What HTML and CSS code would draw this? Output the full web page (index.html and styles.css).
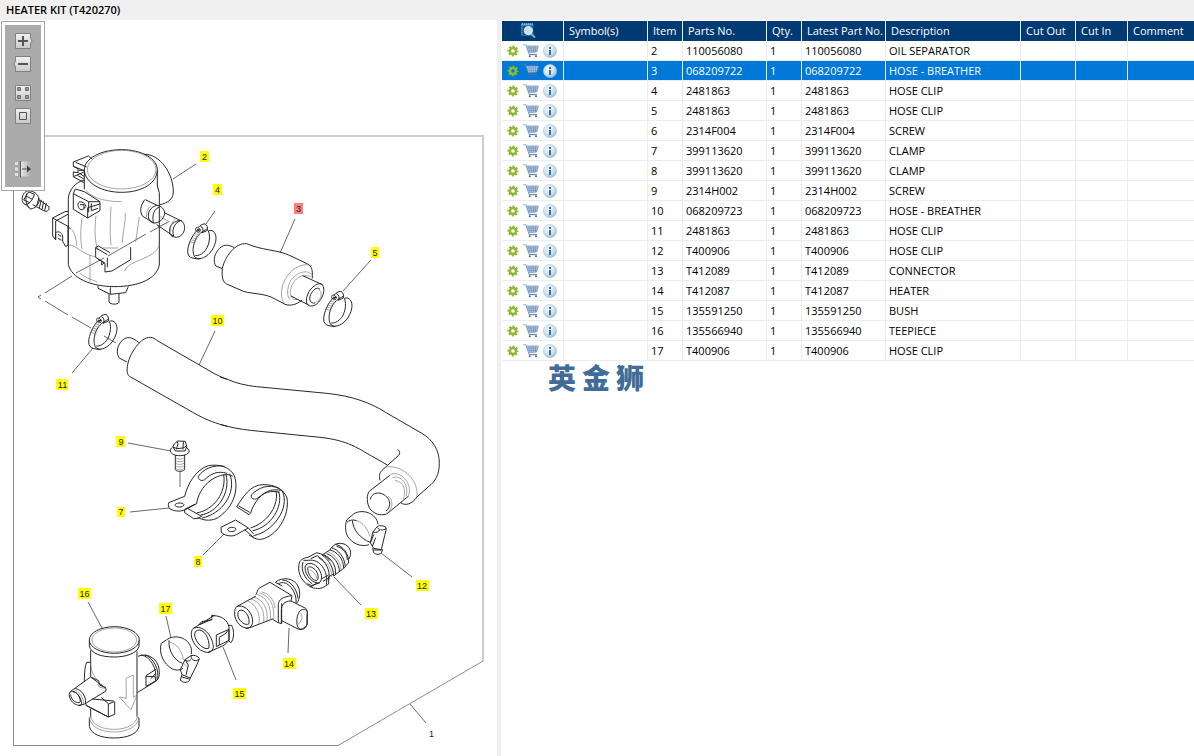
FILE: index.html
```html
<!DOCTYPE html>
<html lang="en">
<head>
<meta charset="utf-8">
<title>HEATER KIT (T420270)</title>
<link rel="stylesheet" href="styles.css">
</head>
<body>
<svg class="defs" aria-hidden="true">
  <defs>
    <linearGradient id="btn" x1="0" y1="0" x2="0" y2="1"><stop offset="0" stop-color="#f2f2f2"/><stop offset="1" stop-color="#c9c9c9"/></linearGradient>
    <linearGradient id="fade" x1="0" y1="0" x2="1" y2="0"><stop offset="0" stop-color="#ececec"/><stop offset="1" stop-color="#ababab"/></linearGradient>
    <radialGradient id="glass" cx=".4" cy=".35" r=".7"><stop offset="0" stop-color="#f0f7fb"/><stop offset=".6" stop-color="#cfe2ee"/><stop offset="1" stop-color="#8fb6d0"/></radialGradient>
    <symbol id="gear" viewBox="0 0 12 12">
      <circle cx="6" cy="6" r="4.7" fill="none" stroke="#86b52b" stroke-width="1.6" stroke-dasharray="2 1.69" stroke-dashoffset="1"/>
      <circle cx="6" cy="6" r="3" fill="none" stroke="#8cbb33" stroke-width="2.4"/>
    </symbol>
    <symbol id="cart" viewBox="0 0 48 48">
      <path d="M9 9H46L41 27L16 29Z" fill="#c3d3e6"/>
      <path d="M1 5H8L19 36M9 9H46L41 27L16 29M12 15H44M14 22H43M17 10L21 28M24 10L26 28M31 10L32 28M38 10L37 28" fill="none" stroke="#6488b3" stroke-width="2"/>
      <path d="M18 35H42" stroke="#4d74a3" stroke-width="3"/>
      <circle cx="20" cy="40" r="3" fill="#456c9b"/><circle cx="39" cy="40" r="3" fill="#456c9b"/>
    </symbol>
    <symbol id="info" viewBox="0 0 14 14">
      <circle cx="7" cy="7" r="6.600" fill="url(#glass)" stroke="#a9c6da" stroke-width=".6"/>
      <path d="M6 3H8V5H6ZM6 6H8V11H6Z" fill="#3a6fa0"/>
    </symbol>
    <symbol id="clip" viewBox="0 0 100 120" overflow="visible">
      <path class="k" d="M31 20C15 35 2 65 2 84C2 96 8 102 18 104L37 107M31 20L41 19M62 14C58 20 35 25 25 50C15 72 17 95 25 102C37 112 62 100 75 80C90 56 91 32 78 23C74 20 70 20 64 22M64 22C72 40 66 72 50 86C42 94 32 97 25 96"/>
      <path class="k" d="M33 13C38 6 46 1 54 1C60 5 63 12 61 21L45 28M40 8C48 10 50 20 46 28M26 19C24 12 32 10 37 15C42 20 39 28 32 26C28 25 27 22 26 19ZM30 17L37 24M37 16L31 24"/>
      <path class="t" d="M21 29L38 35M18 35L34 41M14 42L31 47M11 48L28 53M9 55L25 59"/>
    </symbol>
  </defs>
</svg>

<header class="titlebar"><h1>HEATER KIT (T420270)</h1></header>

<main class="split">
  <section class="drawing" aria-label="Parts diagram">
    <svg class="diagram" viewBox="0 20 497 736" role="img" aria-label="Heater kit exploded view">
      <g fill="none">
        <path d="M44 136H483V661" stroke="#cdcdcd" stroke-width="2"/>
        <path d="M13.500 136V745.500H338L483 661" stroke="#8c8c8c"/>
      </g>

      <g class="lead">
        <path d="M196 164L173 179M215 211L206 224M295 219L280 253M371 260L343 291M215 331L199 365M72 373L93 348M128 443L171 451M180 472V487M130 512L169 508M203 555L224 534M412 577L381 553M361 605L334 577M288 653L289 628M88 602L102 628M166 616L171 638M236 680L223 647M410 704L426 723"/>
        <path d="M168 222L150 232M146 234L108 256M104 258L76 273M72 276L45 293M41 295L38 297L41 299M45 301L68 315M72 317L91 328"/>
        <path d="M104 336L116 343"/>
      </g>

      <g transform="translate(10 130) scale(.3333)">
        <path class="k" d="M223 120C223 85 273 59 335 59C396 59 442 86 442 120V168L448 188V405M223 120V178M223 120C225 160 276 187 335 187C398 187 440 158 442 122"/>
        <ellipse class="t" cx="335" cy="119" rx="103" ry="58"/>
        <path class="k" d="M403 73C450 72 490 130 490 186C490 207 474 219 450 224M223 150C196 156 175 182 175 208V403C184 444 240 469 312 470C388 470 440 446 448 405"/>
        <path class="k" d="M190 96L235 78L246 87M190 96V109L222 122M190 125V140L222 158M190 109L204 116V128L190 126M206 121H222M205 128L222 139M190 140L222 126M197 97L230 111M202 136L222 147"/>
        <path class="k" d="M196 177L190 191V238L233 264L270 242V215L223 185ZM190 191L236 215L270 215M233 264V233L270 222M236 215V247M244 220V242L264 235M204 222C208 210 224 216 228 229L220 238C210 242 204 234 204 222M210 224H222V236"/>
        <path class="k" d="M174 244L165 245L128 264V318L137 329V273L174 253M128 264L174 289V345M174 289L182 298M137 329V310C139 303 154 303 158 318V334L167 350L176 344M144 313L154 320M144 325L155 331"/>
        <path class="t" d="M187 300C200 320 198 338 201 348M216 264C211 300 211 330 216 357M258 257C253 300 255 335 263 360M303 230C300 280 300 320 303 346M346 250C348 274 337 310 337 340M388 261L377 336M176 345C198 344 220 376 257 380M240 375V455M448 345C435 390 354 388 343 424M229 183C255 210 300 215 335 215M210 430C225 442 240 447 262 456"/>
        <path class="k" d="M265 348L257 353V382L285 400V426L306 423L362 389V352M257 353L292 374M265 348L300 368M292 383V412M264 388L283 398L275 405V395"/>
        <path class="t" d="M277 354H325"/>
        <path class="k" d="M404 209L395 225C390 240 392 250 398 259L432 279M406 209L445 228M416 265C412 247 421 231 441 226C454 227 464 238 464 251C461 268 446 281 430 279C424 277 419 273 416 265ZM430 275C426 256 432 237 447 232M463 248L516 274M440 284L490 318M480 311C475 292 484 276 510 271C522 275 528 291 521 306C515 319 502 325 490 320C484 318 481 316 480 311ZM491 318C485 300 492 280 510 273"/>
        <path class="t" d="M423 227C412 235 408 251 410 262M497 267C485 275 480 290 483 306M447 258L478 275L452 288"/>
        <path class="k" d="M264 468V475L301 493L347 488L355 470M301 493V472M297 493V516C302 524 322 525 327 517V491"/>
        <path class="k" d="M61 183C50 181 42 187 38 198C34 211 38 222 49 225L62 237C76 235 86 225 88 210L117 230V237C114 245 108 245 101 242L68 224M61 183C77 185 88 198 87 212M48 198L56 186L74 193L67 208ZM48 198L41 210L59 218L67 208M49 225L59 218"/>
        <path class="k" d="M51 190C44 205 48 225 60 236M87 204L80 227M94 209L88 234M101 214L96 239M109 219L104 243"/>
      </g>

      <use href="#clip" x="0" y="0" width="100" height="120" transform="translate(187 223.500) scale(.3333)"/>
      <use href="#clip" x="0" y="0" width="100" height="120" transform="translate(323 291) scale(.3333)"/>
      <use href="#clip" x="0" y="0" width="100" height="120" transform="translate(88 314) scale(.3333)"/>

      <g transform="translate(180 140) scale(.3333)">
        <path class="k" d="M163 323C145 313 127 311 113 332C102 346 100 365 107 378L127 386M200 311C165 308 135 350 127 385C125 412 128 427 140 432L190 454C220 463 254 459 285 477L315 493C333 499 350 493 366 481M200 311C245 331 290 329 326 345L377 369C392 375 398 384 397 406V415"/>
        <path class="t" d="M397 378C374 367 341 381 324 405C300 437 300 475 313 491M397 405C379 385 347 400 332 422C320 447 320 470 331 480M393 411C366 397 342 417 333 443C328 462 332 470 341 478L357 479"/>
        <path class="k" d="M368 407L427 434M333 468L386 495M427 434C438 449 428 478 409 493C397 501 384 500 380 489C376 474 386 449 403 438C412 431 421 429 427 434ZM420 448C410 438 397 453 392 464C385 480 392 491 405 489"/>
        <path class="t" d="M416 448C430 458 423 480 407 487"/>
      </g>

      <g transform="translate(20 290) scale(.3333)">
        <path class="k" d="M357 158C336 141 320 136 303 155C288 174 290 195 299 205L321 216M391 142C360 141 326 195 322 230C320 249 323 257 332 261L520 368C560 391 590 401 622 409M391 142C402 142 408 150 417 155L585 252C600 259 610 264 622 268"/>
      </g>
      <g transform="translate(220 340) scale(.3333)">
        <path class="k" d="M22 118C50 130 75 136 110 140L320 160C400 168 455 190 500 219L604 279C638 299 658 328 658 370C658 405 645 425 628 438L591 471C575 494 555 498 542 488M22 259C50 266 85 271 120 274L300 292C385 301 415 326 455 348L502 375"/>
        <path class="k" d="M22 118L0 111M22 259L0 253"/>
        <path class="k" d="M533 328C540 334 541 341 536 346L486 391C477 400 478 412 480 421M510 406L450 452C438 462 440 493 451 508C468 527 490 528 504 519L566 468"/>
        <path class="t" d="M500 381C550 374 600 425 590 472M511 404C542 390 578 430 566 467M518 413C542 403 569 435 558 469M525 421C545 425 560 440 551 477M505 468C520 482 519 502 504 518"/>
        <path class="k" d="M451 479C456 450 494 455 506 479C513 493 507 508 498 513"/>
      </g>

      <g transform="translate(100 430) scale(.3333)">
        <path class="k" d="M223 42L233 33L256 34L260 50L255 63H226L219 50ZM219 51L231 56L249 54L260 48M231 34L234 42L229 58M250 35L249 58M218 51C207 58 209 72 228 76C247 80 268 73 268 63L260 52M226 76V119C232 126 247 126 254 119V75"/>
        <path class="t" d="M227 84C235 89 246 88 254 83M227 92C235 97 246 96 254 91M227 100C235 105 246 104 254 99M227 108C235 113 246 112 254 107M227 116C235 121 246 120 254 115"/>
        <path class="k" d="M206 218C204 224 205 231 210 237C228 246 246 245 262 236L290 221C292 200 306 170 333 150C360 133 384 130 398 139M206 218L254 199C262 165 286 119 325 107C360 101 390 112 403 137C419 185 395 240 348 266C328 274 309 271 293 262"/>
        <path class="k" d="M225 226C225 218 249 216 252 224C252 232 228 234 225 226ZM254 238L286 222M254 239V248L281 266L294 265L307 257M262 235L303 258M374 109C340 103 310 117 295 139C294 149 304 155 314 149C332 132 352 121 381 130M371 133C380 187 342 240 290 249M378 133C393 190 350 249 302 255M389 131C412 190 364 253 306 264"/>
        <path class="k" d="M489 164C451 164 430 200 410 230L447 254L452 249C461 218 486 187 512 181C530 178 545 180 551 186M489 164C524 163 552 178 561 204C570 260 529 319 484 328C470 330 456 321 447 315M415 227L449 247M539 176C506 160 475 173 454 195C453 207 463 211 474 204C492 188 512 180 538 187"/>
        <path class="k" d="M528 183C537 222 507 276 452 294M536 184C551 230 512 292 458 302M547 183C571 234 520 305 461 317M363 292L407 270L445 294L407 315C395 321 371 317 364 306ZM383 299C384 290 407 290 408 298C406 306 385 308 383 299ZM434 299L462 323M445 294L461 312"/>
      </g>

      <g transform="translate(220 490) scale(.3333)">
        <path class="k" d="M402 71C427 56 470 69 474 103M402 71L380 90C374 110 376 133 388 146C405 166 430 170 447 164M381 97C386 90 400 88 410 92M397 92C400 122 422 145 450 157M472 109L459 126L451 158L461 175L484 179L494 137L499 116C498 107 479 105 472 109ZM472 113C479 121 490 122 498 116M459 126C469 130 476 125 479 120M458 174L461 188C469 195 480 194 485 188L488 178M461 180H486M451 158L462 133M457 170L467 143"/>
        <path class="t" d="M410 92C428 96 445 120 450 140"/>
        <path class="k" d="M237 224C238 210 250 204 264 202L290 188C308 192 322 200 330 212M237 224C231 251 249 280 275 292C290 298 307 296 315 289L326 282L326 260L341 252M249 216C241 240 254 266 277 282M255 231C260 215 279 218 292 231C306 247 309 269 298 278C282 283 255 260 255 231ZM263 235C264 226 279 231 288 242C296 254 297 269 289 272C276 271 264 253 263 235ZM272 206L292 197L310 211M250 211L265 211C300 205 326 244 319 284M306 195C328 210 340 233 341 258M296 203C317 215 331 239 327 268M306 195L330 180M330 180C350 184 371 206 371 235L341 258M320 191C340 197 359 220 358 246M312 194C333 205 350 226 346 252M330 180L334 173C355 179 374 200 376 231L371 235M334 173L346 163C369 168 387 190 386 219L376 228M346 163C366 154 391 166 392 188C392 197 389 203 386 207M350 169C370 174 383 192 382 210M262 281L275 287L300 278M272 291L291 279M305 266L325 256M309 274L326 264"/>
        <path class="t" d="M269 239C283 246 291 259 290 268M301 207C325 218 337 240 334 262M325 186C343 193 364 215 363 241"/>
        <path class="k" d="M166 277C188 259 224 264 235 290C241 307 241 326 230 340M166 277L187 288M175 281C202 266 232 307 228 339M187 270C212 270 232 300 234 325M150 277L216 317L213 333C193 333 184 345 184 360V401L172 397L158 388M150 277L118 294C111 300 113 306 108 314M175 398V344C176 327 190 321 214 317M213 333L257 355C263 360 263 369 261 376V404C258 416 246 421 236 418L185 392M185 340V401M235 414C227 403 230 373 240 362C249 356 260 357 262 367V402C254 416 241 421 235 414ZM108 318L50 350M160 386L90 413L77 416M50 350C68 342 94 359 98 390C99 401 95 411 86 414C64 417 45 395 44 373C43 361 46 354 50 350ZM59 361C75 357 90 379 87 401C78 409 58 395 54 379C53 370 54 364 59 361"/>
        <path class="t" d="M102 322C130 330 145 355 141 394M92 327C120 335 135 360 131 397M112 314C140 322 154 347 151 388M119 309C147 317 164 342 161 383M82 332C107 343 122 370 117 401M126 307C144 307 164 330 165 355M241 369C251 378 244 396 234 403"/>
      </g>

      <g transform="translate(50 580) scale(.3333)">
        <ellipse class="k" cx="193" cy="180" rx="75" ry="40"/><ellipse class="t" cx="193" cy="180" rx="67" ry="36"/>
        <path class="k" d="M118 182V198C123 221 154 231 193 231C229 231 260 220 267 200V182M122 211V290M261 214V409M122 386V410L118 415V440C124 462 151 474 193 474C234 474 262 461 267 440V415L262 410"/>
        <path class="t" d="M118 415C125 442 153 456 193 456C232 456 260 440 267 417M122 410C128 435 155 448 193 448C230 448 257 434 262 410"/>
        <path class="k" d="M264 229C287 219 315 230 325 257C330 277 330 295 317 304L262 338M273 225C300 228 323 265 317 304M285 224C312 235 328 270 323 298M288 287L318 268M288 287V319L318 302L315 290L288 289M303 296L318 279M122 247H110C103 260 103 300 103 306M108 371V376L175 411L194 403M126 357L191 363M108 376L175 411V372M194 366V403M154 353L176 372L194 364M62 334L122 291L168 325V333L102 373L86 377M62 334C74 331 93 346 95 372C91 379 77 376 68 367C56 353 55 341 62 334ZM69 336C80 335 91 350 91 365C83 374 62 361 62 344M76 326C94 328 110 350 106 370M122 291L146 302L148 315L168 323"/>
        <path class="t" d="M70 329C88 334 101 353 101 373M143 313L149 322L168 325M122 247C122 275 132 290 144 302M228 295L250 285V352L261 345L243 389L208 351L229 355Z"/>
        <path class="k" d="M349 180C374 161 416 172 424 206V222M349 180L334 190C325 220 341 252 367 267C383 273 392 270 399 265M357 181C355 215 374 241 397 250M423 227L405 239L391 269L396 284L421 294L441 254L448 236C444 227 430 224 423 227ZM423 227C423 241 437 247 448 237M405 239C413 248 421 241 425 236M396 284L391 300C397 309 413 309 418 302L421 294M395 291L418 297M405 239L415 255L408 286"/>
        <path class="t" d="M357 185C380 190 398 215 400 240M399 248L411 260"/>
        <path class="k" d="M430 145L492 107C513 108 532 118 537 141V182L522 196L474 217M430 145C456 133 488 164 490 201C488 213 480 219 470 217C445 214 424 185 424 163C424 154 426 149 430 145ZM442 151C461 145 480 174 477 204C464 214 435 186 434 165C434 158 437 153 442 151M485 115V106L495 107M446 135L455 125L486 119M449 134L488 117M537 136H545C554 154 552 177 543 188L537 184M499 165L537 148V181L499 200ZM508 172L526 161M508 172V195M526 161L537 148"/>
      </g>

      <g class="callouts">
        <a href="#p2"><rect x="200" y="151" width="9" height="11"/><text x="204.500" y="160">2</text></a>
        <a href="#p4"><rect x="213" y="184" width="9" height="11"/><text x="217.500" y="193">4</text></a>
        <a href="#p3" class="on"><rect x="294" y="203" width="9" height="11"/><text x="298.500" y="212">3</text></a>
        <a href="#p5"><rect x="371" y="247" width="8" height="11"/><text x="375" y="256">5</text></a>
        <a href="#p10"><rect x="211" y="315" width="13" height="11"/><text x="217.500" y="324">10</text></a>
        <a href="#p11"><rect x="56" y="379" width="12" height="11"/><text x="62.500" y="388">11</text></a>
        <a href="#p9"><rect x="116" y="436" width="9" height="11"/><text x="121" y="445">9</text></a>
        <a href="#p7"><rect x="117" y="507" width="8" height="10"/><text x="121" y="515">7</text></a>
        <a href="#p8"><rect x="194" y="556" width="8" height="11"/><text x="198" y="565">8</text></a>
        <a href="#p12"><rect x="416" y="580" width="13" height="11"/><text x="422" y="589">12</text></a>
        <a href="#p13"><rect x="365" y="608" width="13" height="11"/><text x="371" y="617">13</text></a>
        <a href="#p14"><rect x="283" y="658" width="13" height="11"/><text x="289" y="667">14</text></a>
        <a href="#p16"><rect x="78" y="588" width="13" height="11"/><text x="84.500" y="597">16</text></a>
        <a href="#p17"><rect x="159" y="603" width="13" height="11"/><text x="165.500" y="612">17</text></a>
        <a href="#p15"><rect x="233" y="688" width="13" height="11"/><text x="239.500" y="697">15</text></a>
        <text x="431.500" y="737">1</text>
      </g>
    </svg>

    <div class="toolbar" role="toolbar" aria-label="Diagram view">
      <div class="tools">
        <button type="button" aria-label="Zoom in"><svg viewBox="0 0 20 16"><path d="M2.500 .5H17.500V5L19 8L17.500 11V15.500H2.500Z" fill="url(#btn)" stroke="#808080"/><path d="M5 8H15M10 3V13" stroke="#555" stroke-width="2"/></svg></button>
        <button type="button" aria-label="Zoom out"><svg viewBox="0 0 20 16"><path d="M2.500 .5H17.500V15.500H2.500V11L1 8L2.500 5Z" fill="url(#btn)" stroke="#808080"/><path d="M5 8H15" stroke="#555" stroke-width="2"/></svg></button>
        <button type="button" class="gap-s" aria-label="Tile view"><svg viewBox="0 0 20 16"><path d="M2.500 .5H17.500V15.500H2.500Z" fill="url(#btn)" stroke="#808080"/><path d="M4.500 2.500h3v3h-3zM12.500 2.500h3v3h-3zM4.500 10.500h3v3h-3zM12.500 10.500h3v3h-3z" fill="#9a9a9a" stroke="#6b6b6b"/></svg></button>
        <button type="button" aria-label="Fit to window"><svg viewBox="0 0 20 16"><path d="M2.500 .5H17.500V15.500H2.500Z" fill="url(#btn)" stroke="#808080"/><path d="M6.500 4.500h7v7h-7z" fill="none" stroke="#555"/></svg></button>
        <button type="button" class="gap-l" aria-label="Move panel"><svg viewBox="0 0 20 16"><path d="M7 .5H18V15.500H7Z" fill="url(#fade)"/><path d="M1.500 .5H5.500V4.500H1.500ZM1.500 6H5.500V10H1.500ZM1.500 11.500H5.500V15.500H1.500Z" fill="#e2e2e2" stroke="#8a8a8a" stroke-width=".5"/><path d="M7.500 0V16M9 8H16" stroke="#555"/><path d="M14 4.500L18 8L14 11.500Z" fill="#444"/></svg></button>
      </div>
    </div>
  </section>

  <div class="divider" role="separator"></div>

  <section class="list" aria-label="Parts list">
    <table class="parts">
      <colgroup><col class="c-act"><col class="c-mid"><col class="c-num"><col class="c-mid"><col class="c-num"><col class="c-mid"><col class="c-desc"><col class="c-out"><col class="c-in"><col></colgroup>
      <thead>
        <tr><th class="find"><button type="button" aria-label="Search parts"><svg width="17" height="16" viewBox="0 0 51 48"><path d="M3 2H40V38H3Z" fill="#2d83b8"/><path d="M5 3H38" stroke="#e8f4fb" stroke-width="3" stroke-dasharray="4 2"/><path d="M5 10H38V36H5Z" fill="#0d5387"/><path d="M7 14V35" stroke="#bdd9ea" stroke-width="2" stroke-dasharray="3 3"/><circle cx="25" cy="23" r="12" fill="#c9dfec" stroke="#f2f8fc" stroke-width="3"/><path d="M34 33L45 44" stroke="#8da8bd" stroke-width="6"/></svg></button></th><th>Symbol(s)</th><th>Item</th><th>Parts No.</th><th>Qty.</th><th>Latest Part No.</th><th>Description</th><th>Cut Out</th><th>Cut In</th><th>Comment</th></tr>
      </thead>
      <tbody>
        <tr id="p2"><td><div class="act"><button type="button" aria-label="Options"><svg class="g"><use href="#gear"/></svg></button><button type="button" aria-label="Add to cart"><svg class="c"><use href="#cart"/></svg></button><button type="button" aria-label="Information"><svg class="i"><use href="#info"/></svg></button></div></td><td></td><td>2</td><td>110056080</td><td>1</td><td>110056080</td><td>OIL SEPARATOR</td><td></td><td></td><td></td></tr>
        <tr id="p3" class="selected"><td><div class="act"><button type="button" aria-label="Options"><svg class="g"><use href="#gear"/></svg></button><button type="button" aria-label="Add to cart"><svg class="c"><use href="#cart"/></svg></button><button type="button" aria-label="Information"><svg class="i"><use href="#info"/></svg></button></div></td><td></td><td>3</td><td>068209722</td><td>1</td><td>068209722</td><td>HOSE - BREATHER</td><td></td><td></td><td></td></tr>
        <tr id="p4"><td><div class="act"><button type="button" aria-label="Options"><svg class="g"><use href="#gear"/></svg></button><button type="button" aria-label="Add to cart"><svg class="c"><use href="#cart"/></svg></button><button type="button" aria-label="Information"><svg class="i"><use href="#info"/></svg></button></div></td><td></td><td>4</td><td>2481863</td><td>1</td><td>2481863</td><td>HOSE CLIP</td><td></td><td></td><td></td></tr>
        <tr id="p5"><td><div class="act"><button type="button" aria-label="Options"><svg class="g"><use href="#gear"/></svg></button><button type="button" aria-label="Add to cart"><svg class="c"><use href="#cart"/></svg></button><button type="button" aria-label="Information"><svg class="i"><use href="#info"/></svg></button></div></td><td></td><td>5</td><td>2481863</td><td>1</td><td>2481863</td><td>HOSE CLIP</td><td></td><td></td><td></td></tr>
        <tr id="p6"><td><div class="act"><button type="button" aria-label="Options"><svg class="g"><use href="#gear"/></svg></button><button type="button" aria-label="Add to cart"><svg class="c"><use href="#cart"/></svg></button><button type="button" aria-label="Information"><svg class="i"><use href="#info"/></svg></button></div></td><td></td><td>6</td><td>2314F004</td><td>1</td><td>2314F004</td><td>SCREW</td><td></td><td></td><td></td></tr>
        <tr id="p7"><td><div class="act"><button type="button" aria-label="Options"><svg class="g"><use href="#gear"/></svg></button><button type="button" aria-label="Add to cart"><svg class="c"><use href="#cart"/></svg></button><button type="button" aria-label="Information"><svg class="i"><use href="#info"/></svg></button></div></td><td></td><td>7</td><td>399113620</td><td>1</td><td>399113620</td><td>CLAMP</td><td></td><td></td><td></td></tr>
        <tr id="p8"><td><div class="act"><button type="button" aria-label="Options"><svg class="g"><use href="#gear"/></svg></button><button type="button" aria-label="Add to cart"><svg class="c"><use href="#cart"/></svg></button><button type="button" aria-label="Information"><svg class="i"><use href="#info"/></svg></button></div></td><td></td><td>8</td><td>399113620</td><td>1</td><td>399113620</td><td>CLAMP</td><td></td><td></td><td></td></tr>
        <tr id="p9"><td><div class="act"><button type="button" aria-label="Options"><svg class="g"><use href="#gear"/></svg></button><button type="button" aria-label="Add to cart"><svg class="c"><use href="#cart"/></svg></button><button type="button" aria-label="Information"><svg class="i"><use href="#info"/></svg></button></div></td><td></td><td>9</td><td>2314H002</td><td>1</td><td>2314H002</td><td>SCREW</td><td></td><td></td><td></td></tr>
        <tr id="p10"><td><div class="act"><button type="button" aria-label="Options"><svg class="g"><use href="#gear"/></svg></button><button type="button" aria-label="Add to cart"><svg class="c"><use href="#cart"/></svg></button><button type="button" aria-label="Information"><svg class="i"><use href="#info"/></svg></button></div></td><td></td><td>10</td><td>068209723</td><td>1</td><td>068209723</td><td>HOSE - BREATHER</td><td></td><td></td><td></td></tr>
        <tr id="p11"><td><div class="act"><button type="button" aria-label="Options"><svg class="g"><use href="#gear"/></svg></button><button type="button" aria-label="Add to cart"><svg class="c"><use href="#cart"/></svg></button><button type="button" aria-label="Information"><svg class="i"><use href="#info"/></svg></button></div></td><td></td><td>11</td><td>2481863</td><td>1</td><td>2481863</td><td>HOSE CLIP</td><td></td><td></td><td></td></tr>
        <tr id="p12"><td><div class="act"><button type="button" aria-label="Options"><svg class="g"><use href="#gear"/></svg></button><button type="button" aria-label="Add to cart"><svg class="c"><use href="#cart"/></svg></button><button type="button" aria-label="Information"><svg class="i"><use href="#info"/></svg></button></div></td><td></td><td>12</td><td>T400906</td><td>1</td><td>T400906</td><td>HOSE CLIP</td><td></td><td></td><td></td></tr>
        <tr id="p13"><td><div class="act"><button type="button" aria-label="Options"><svg class="g"><use href="#gear"/></svg></button><button type="button" aria-label="Add to cart"><svg class="c"><use href="#cart"/></svg></button><button type="button" aria-label="Information"><svg class="i"><use href="#info"/></svg></button></div></td><td></td><td>13</td><td>T412089</td><td>1</td><td>T412089</td><td>CONNECTOR</td><td></td><td></td><td></td></tr>
        <tr id="p14"><td><div class="act"><button type="button" aria-label="Options"><svg class="g"><use href="#gear"/></svg></button><button type="button" aria-label="Add to cart"><svg class="c"><use href="#cart"/></svg></button><button type="button" aria-label="Information"><svg class="i"><use href="#info"/></svg></button></div></td><td></td><td>14</td><td>T412087</td><td>1</td><td>T412087</td><td>HEATER</td><td></td><td></td><td></td></tr>
        <tr id="p15"><td><div class="act"><button type="button" aria-label="Options"><svg class="g"><use href="#gear"/></svg></button><button type="button" aria-label="Add to cart"><svg class="c"><use href="#cart"/></svg></button><button type="button" aria-label="Information"><svg class="i"><use href="#info"/></svg></button></div></td><td></td><td>15</td><td>135591250</td><td>1</td><td>135591250</td><td>BUSH</td><td></td><td></td><td></td></tr>
        <tr id="p16"><td><div class="act"><button type="button" aria-label="Options"><svg class="g"><use href="#gear"/></svg></button><button type="button" aria-label="Add to cart"><svg class="c"><use href="#cart"/></svg></button><button type="button" aria-label="Information"><svg class="i"><use href="#info"/></svg></button></div></td><td></td><td>16</td><td>135566940</td><td>1</td><td>135566940</td><td>TEEPIECE</td><td></td><td></td><td></td></tr>
        <tr id="p17"><td><div class="act"><button type="button" aria-label="Options"><svg class="g"><use href="#gear"/></svg></button><button type="button" aria-label="Add to cart"><svg class="c"><use href="#cart"/></svg></button><button type="button" aria-label="Information"><svg class="i"><use href="#info"/></svg></button></div></td><td></td><td>17</td><td>T400906</td><td>1</td><td>T400906</td><td>HOSE CLIP</td><td></td><td></td><td></td></tr>
      </tbody>
    </table>
    <p class="brand" lang="zh-CN"><span>英</span><span>金</span><span>狮</span></p>
  </section>
</main>
</body>
</html>
```

FILE: styles.css
```css
* { box-sizing: border-box; }

body {
  margin: 0;
  min-height: 100vh;
  display: flex;
  flex-direction: column;
  background: #fff;
  color: #000;
  font-family: "Open Sans", "Noto Sans", sans-serif;
  font-size: 11px;
}

button {
  display: block;
  margin: 0;
  padding: 0;
  border: 0;
  background: none;
  cursor: pointer;
}

svg { display: block; }
.defs { position: absolute; width: 0; height: 0; }

.titlebar {
  background: #f0f0f0;
  padding: 0 6px;
}
.titlebar h1 {
  margin: 0;
  font-size: 11px;
  font-weight: 600;
  line-height: 20px;
}

.split {
  flex: 1;
  display: grid;
  grid-template-columns: minmax(0, 497fr) 4px minmax(0, 693fr);
}
.divider { background: #f0f0f0; }

/* Diagram */
.drawing { position: relative; }
.diagram { width: 100%; height: auto; }
.k { fill: none; stroke: #262626; stroke-width: 3; stroke-linejoin: round; }
.t { fill: none; stroke: #777; stroke-width: 2; }
.lead path { fill: none; stroke: #6a6a6a; stroke-width: 1; }
.callouts rect { fill: #ff0; }
.callouts .on rect { fill: #ff8080; }
.callouts text {
  font-family: "Liberation Sans", Arial, sans-serif;
  font-size: 9px;
  text-anchor: middle;
  fill: #222;
}

.toolbar {
  position: absolute;
  top: 1px;
  left: 1px;
  padding: 3px;
  border: 1px solid #a6a6a6;
  background: #fff;
}
.tools {
  display: flex;
  flex-direction: column;
  gap: 7px;
  padding: 8px 8px 10px;
  background: #ababab;
}
.tools svg { width: 20px; height: 16px; }
.gap-s { margin-top: 6px; }
.gap-l { margin-top: 30px; }

/* Parts list */
.list { padding: 1px 0 0 1px; }
.parts {
  width: 100%;
  table-layout: fixed;
  border-collapse: separate;
  border-spacing: 0;
}
.c-act { width: 62px; }
.c-mid { width: 84px; }
.c-num { width: 35px; }
.c-desc { width: 135px; }
.c-out { width: 55px; }
.c-in { width: 52px; }

th, td {
  height: 20px;
  padding: 0 0 0 3px;
  border-right: 1px solid #ececec;
  border-bottom: 1px solid #ececec;
  line-height: 18px;
  text-align: left;
  white-space: nowrap;
}
th {
  padding-left: 5px;
  border-bottom: 0;
  background: #003a73;
  color: #fff;
  font-weight: 400;
  line-height: 20px;
}
th:last-child, td:last-child { border-right: 0; }
.find { padding-left: 18px; }
.selected td { background: #0078d7; color: #fff; }

.act {
  display: flex;
  align-items: center;
  gap: 4px;
  height: 18px;
  padding-left: 2px;
}
.g { width: 12px; height: 12px; }
.c { width: 16px; height: 16px; }
.i { width: 14px; height: 14px; }

.brand {
  display: flex;
  gap: 6px;
  margin: 2px 0 0 46px;
  color: #416c98;
  font-family: "Noto Sans CJK SC", sans-serif;
  font-size: 28px;
  font-weight: 900;
  line-height: 28px;
}
```
